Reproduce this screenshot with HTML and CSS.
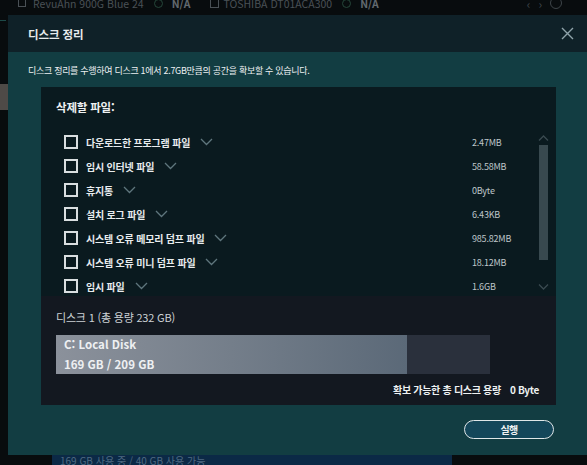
FILE: index.html
```html
<!DOCTYPE html>
<html lang="ko">
<head>
<meta charset="utf-8">
<title>디스크 정리</title>
<link rel="stylesheet" href="styles.css">
</head>
<body>
<div class="app">
  <div class="topbar">
    <div class="tb-row">
      <span class="tb-box"></span>
      <span class="tb-name">RevuAhn 900G Blue 24</span>
      <span class="tb-circle"></span>
      <span class="tb-na">N/A</span>
      <span class="tb-drive"></span>
      <span class="tb-name">TOSHIBA DT01ACA300</span>
      <span class="tb-circle"></span>
      <span class="tb-na">N/A</span>
      <span class="tb-nav">‹</span>
      <span class="tb-nav">›</span>
      <span class="tb-round"></span>
    </div>
  </div>
  <div class="middle">
    <div class="side">
      <div class="side-dash"></div>
      <div class="side-block"></div>
    </div>
  </div>
  <div class="bottom">
    <div class="bottom-bar">169 GB 사용 중 / 40 GB 사용 가능</div>
  </div>
</div>

<div class="modal">
  <div class="modal-head">
    <div class="modal-title">디스크 정리</div>
    <svg class="close" width="13" height="13" viewBox="0 0 13 13"><path d="M1 1 L12 12 M12 1 L1 12" stroke="#8fa3aa" stroke-width="1.4" fill="none"/></svg>
  </div>
  <div class="modal-body">
    <div class="desc">디스크 정리를 수행하여 디스크 1에서 2.7GB만큼의 공간을 확보할 수 있습니다.</div>
    <div class="panel">
      <div class="panel-top">
        <div class="panel-title">삭제할 파일:</div>
        <div class="list-area">
          <div class="list">
            <div class="row"><div class="row-left"><span class="cb"></span><span class="label">다운로드한 프로그램 파일</span><svg class="chev" width="13" height="8" viewBox="0 0 13 8"><path d="M1 1 L6.5 6.5 L12 1" stroke="#5f767d" stroke-width="1.3" fill="none"/></svg></div><span class="size">2.47MB</span></div>
            <div class="row"><div class="row-left"><span class="cb"></span><span class="label">임시 인터넷 파일</span><svg class="chev" width="13" height="8" viewBox="0 0 13 8"><path d="M1 1 L6.5 6.5 L12 1" stroke="#5f767d" stroke-width="1.3" fill="none"/></svg></div><span class="size">58.58MB</span></div>
            <div class="row"><div class="row-left"><span class="cb"></span><span class="label">휴지통</span><svg class="chev" width="13" height="8" viewBox="0 0 13 8"><path d="M1 1 L6.5 6.5 L12 1" stroke="#5f767d" stroke-width="1.3" fill="none"/></svg></div><span class="size">0Byte</span></div>
            <div class="row"><div class="row-left"><span class="cb"></span><span class="label">설치 로그 파일</span><svg class="chev" width="13" height="8" viewBox="0 0 13 8"><path d="M1 1 L6.5 6.5 L12 1" stroke="#5f767d" stroke-width="1.3" fill="none"/></svg></div><span class="size">6.43KB</span></div>
            <div class="row"><div class="row-left"><span class="cb"></span><span class="label">시스템 오류 메모리 덤프 파일</span><svg class="chev" width="13" height="8" viewBox="0 0 13 8"><path d="M1 1 L6.5 6.5 L12 1" stroke="#5f767d" stroke-width="1.3" fill="none"/></svg></div><span class="size">985.82MB</span></div>
            <div class="row"><div class="row-left"><span class="cb"></span><span class="label">시스템 오류 미니 덤프 파일</span><svg class="chev" width="13" height="8" viewBox="0 0 13 8"><path d="M1 1 L6.5 6.5 L12 1" stroke="#5f767d" stroke-width="1.3" fill="none"/></svg></div><span class="size">18.12MB</span></div>
            <div class="row"><div class="row-left"><span class="cb"></span><span class="label">임시 파일</span><svg class="chev" width="13" height="8" viewBox="0 0 13 8"><path d="M1 1 L6.5 6.5 L12 1" stroke="#5f767d" stroke-width="1.3" fill="none"/></svg></div><span class="size">1.6GB</span></div>
          </div>
          <div class="scrollbar">
            <svg class="sb-arrow" width="11" height="6" viewBox="0 0 11 6"><path d="M1 5.5 L5.5 1 L10 5.5" stroke="#3a4a50" stroke-width="1.3" fill="none"/></svg>
            <div class="sb-thumb"></div>
            <div class="sb-space"></div>
            <svg class="sb-arrow" width="11" height="6" viewBox="0 0 11 6"><path d="M1 0.5 L5.5 5 L10 0.5" stroke="#3a4a50" stroke-width="1.3" fill="none"/></svg>
          </div>
        </div>
      </div>
      <div class="panel-bottom">
        <div class="disk-label">디스크 1 (총 용량 232 GB)</div>
        <div class="disk-bar">
          <div class="disk-used">
            <div class="disk-line">C: Local Disk</div>
            <div class="disk-line">169 GB / 209 GB</div>
          </div>
          <div class="disk-free"></div>
        </div>
        <div class="total"><span>확보 가능한 총 디스크 용량</span><span class="total-val">0 Byte</span></div>
      </div>
    </div>
    <div class="actions">
      <button class="run">실행</button>
    </div>
  </div>
</div>
</body>
</html>
```
FILE: styles.css
```css
* { box-sizing: border-box; }
html, body { margin: 0; padding: 0; }
body {
  width: 587px;
  height: 465px;
  overflow: hidden;
  position: relative;
  background: #080c0e;
  font-family: "Noto Sans CJK KR", "Noto Sans", sans-serif;
  color: #e6eaec;
}

/* background app */
.topbar { height: 15px; overflow: hidden; }
.tb-row {
  display: flex;
  align-items: center;
  height: 12px;
  margin-top: -3px;
  padding-left: 18px;
  font-size: 10.5px;
  color: #4a5156;
}
.tb-box { width: 8px; height: 8px; border: 1px solid #4a5156; margin-right: 7px; }
.tb-name { white-space: nowrap; }
.tb-circle { width: 9px; height: 9px; border: 1.5px solid #25473a; border-radius: 50%; margin-left: 10px; margin-right: 9px; }
.tb-na { font-weight: 700; color: #62696e; margin-right: 20px; }
.tb-drive { width: 9px; height: 9px; border: 1px solid #4a5156; margin-right: 4px; }
.tb-nav { color: #3e4549; font-size: 12px; margin-left: 128px; }
.tb-nav + .tb-nav { margin-left: 8px; }
.tb-round { width: 12px; height: 12px; border: 1.5px solid #3e4549; border-radius: 50%; margin-left: 8px; }

.middle { height: 440px; }
.side { width: 8px; padding-top: 5px; }
.side-dash { width: 6px; height: 1px; background: #1d4a48; }
.side-block { margin-top: 63px; height: 26px; background: #4e4a47; }

.bottom { height: 10px; padding-left: 52px; }
.bottom-bar {
  width: 400px;
  height: 10px;
  overflow: hidden;
  background: #0b2946;
  color: #4f6a82;
  font-size: 10px;
  line-height: 12px;
  padding-left: 8px;
}

/* modal */
.modal {
  position: absolute;
  left: 8px;
  top: 15px;
  right: 0;
  height: 440px;
  display: flex;
  flex-direction: column;
  background: #123d42;
}
.modal-head {
  height: 37px;
  flex: none;
  background: #0f2128;
  display: flex;
  align-items: center;
  justify-content: space-between;
  padding: 0 13px 0 20px;
}
.modal-title { font-size: 11.5px; font-weight: 700; letter-spacing: -0.1px; color: #e6eaec; }
.close { display: block; }

.modal-body { flex: 1; padding: 12px 31px 0 20px; }
.desc {
  font-size: 9px;
  line-height: 13px;
  letter-spacing: -0.3px;
  color: #eef1f2;
  white-space: nowrap;
}
.panel { margin: 10px 0 0 13px; width: 515px; }
.panel-top { background: #0a1a1f; height: 209px; padding-top: 12px; }
.panel-title {
  font-size: 11.5px;
  font-weight: 700;
  line-height: 16px;
  letter-spacing: -0.2px;
  padding-left: 15px;
  color: #eef1f2;
}
.list-area { display: flex; height: 166px; margin-top: 15px; overflow: hidden; }
.list { flex: 1; padding-left: 23px; }
.row { display: flex; align-items: center; height: 24px; }
.row-left { display: flex; align-items: center; width: 408px; }
.cb { width: 14px; height: 14px; border: 2px solid #d9dee0; flex: none; }
.label {
  margin-left: 8px;
  font-size: 10px;
  font-weight: 700;
  letter-spacing: -0.2px;
  color: #e8ecee;
  white-space: nowrap;
}
.chev { margin-left: 10px; display: block; }
.size { font-size: 9px; color: #bfc6ca; letter-spacing: -0.2px; }

.scrollbar {
  width: 11px;
  margin-right: 7px;
  display: flex;
  flex-direction: column;
  align-items: center;
  padding-top: 5px;
}
.sb-arrow { display: block; flex: none; }
.sb-thumb { width: 9px; height: 115px; margin-top: 4px; background: #38494f; flex: none; }
.sb-space { flex: 1; }
.scrollbar .sb-arrow:last-child { margin-bottom: 6px; }

.panel-bottom { background: #131820; height: 109px; padding: 14px 17px 0 15px; }
.disk-label { font-size: 11px; line-height: 14px; color: #cdd2d6; letter-spacing: -0.2px; }
.disk-bar { display: flex; width: 434px; height: 39px; margin-top: 11px; }
.disk-used {
  width: 351px;
  background: linear-gradient(90deg, #8b919b 0%, #747e8a 50%, #5b6978 100%);
  padding-left: 8px;
}
.disk-line { font-size: 11.5px; font-weight: 700; line-height: 20px; color: #eef0f2; white-space: nowrap; }
.disk-line:first-child { line-height: 19px; }
.disk-free { flex: 1; background: #2a303c; }
.total {
  display: flex;
  justify-content: flex-end;
  margin-top: 9px;
  font-size: 10px;
  line-height: 14px;
  font-weight: 700;
  letter-spacing: -0.3px;
  color: #eef1f2;
}
.total-val { margin-left: 9px; }

.actions { display: flex; justify-content: flex-end; padding-top: 15px; margin-right: 2px; }
.run {
  width: 90px;
  height: 19px;
  border: 1.5px solid #dfe6e8;
  border-radius: 10px;
  background: #14475a;
  color: #f0f3f4;
  font-family: "Noto Sans CJK KR", "Noto Sans", sans-serif;
  font-size: 10px;
  font-weight: 700;
  letter-spacing: -0.8px;
  padding: 0;
  line-height: 15px;
}
```
